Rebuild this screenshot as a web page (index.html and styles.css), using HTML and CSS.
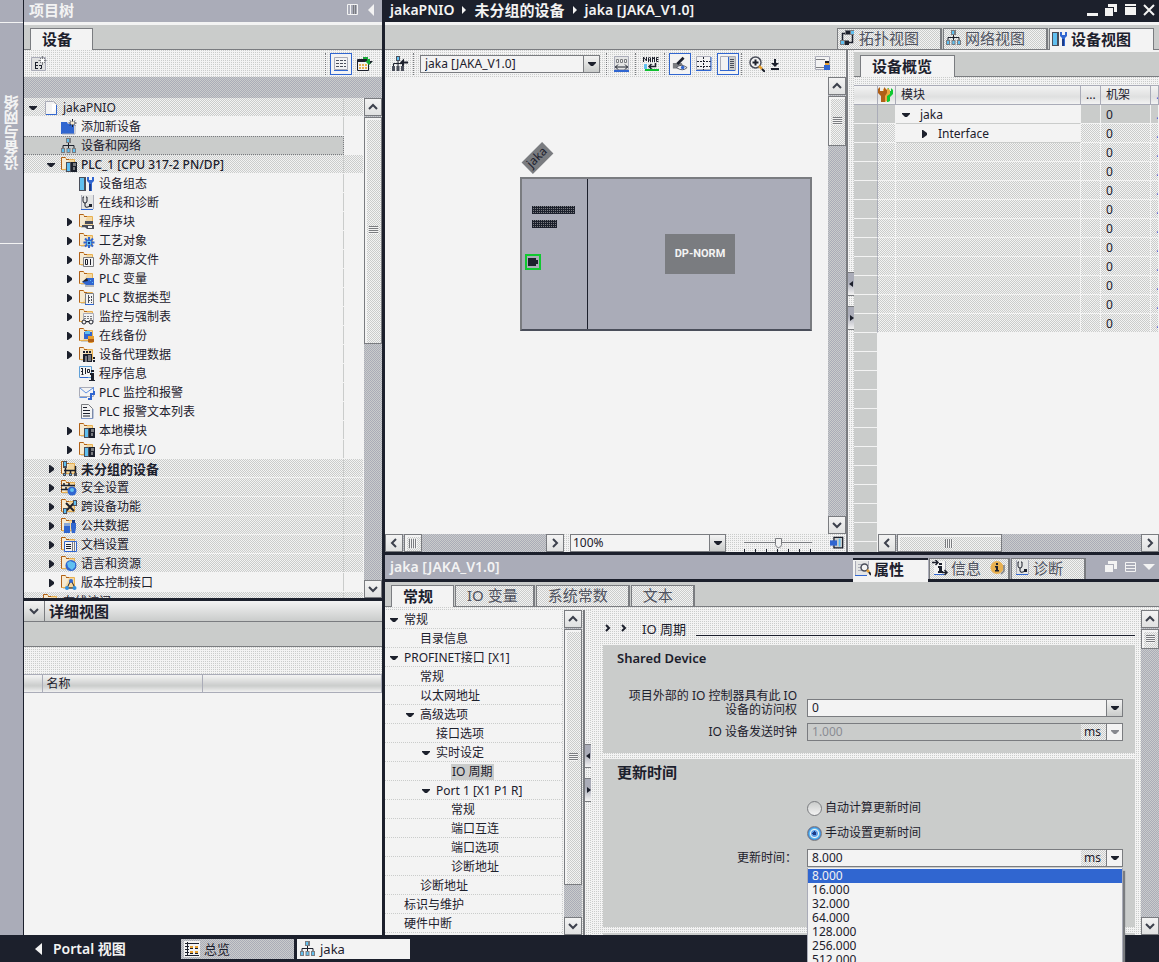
FILE: index.html
```html
<!DOCTYPE html>
<html lang="zh-CN">
<head>
<meta charset="utf-8">
<title>jakaPNIO</title>
<link rel="stylesheet" href="styles.css">
</head>
<body>
<svg class="defs" aria-hidden="true">
  <symbol id="right" viewBox="0 0 10 10"><path d="M3 1h1l4 3v2l-4 3H3z" fill="#1c202c"/></symbol>
  <symbol id="down" viewBox="0 0 10 10"><path d="M1 3h8v1L6 7H4L1 4z" fill="#1c202c"/></symbol>
  <symbol id="c-up" viewBox="0 0 12 12"><path d="M2 8l4-4 4 4" fill="none" stroke="#3c404c" stroke-width="2"/></symbol>
  <symbol id="c-down" viewBox="0 0 12 12"><path d="M2 4l4 4 4-4" fill="none" stroke="#3c404c" stroke-width="2"/></symbol>
  <symbol id="c-left" viewBox="0 0 12 12"><path d="M8 2L4 6l4 4" fill="none" stroke="#3c404c" stroke-width="2"/></symbol>
  <symbol id="c-right" viewBox="0 0 12 12"><path d="M4 2l4 4-4 4" fill="none" stroke="#3c404c" stroke-width="2"/></symbol>
  <symbol id="folder" viewBox="0 0 16 16"><path d="M2 13h12v1H2z" fill="#cacccb"/><path d="M.5 12.500V.500h4l1 2h8v10z" fill="#f6ead2" stroke="#e8b050"/><path d="M8 3h5v9H4z" fill="#f2cf8c" opacity=".7"/><path d="M.5 12.500V.500h4M5 2.500h3" fill="none" stroke="#b06018"/></symbol>
  <symbol id="project" viewBox="0 0 16 16"><path d="M2.500 1.500h8l3 3v10h-11z" fill="#f3f3f3" stroke="#aaacb8"/><path d="M3 14.500h10.500V5" fill="none" stroke="#3066d0"/><path d="M9 4h4v5l-4 4z" fill="#fff"/></symbol>
  <symbol id="add" viewBox="0 0 16 16"><path d="M0 3h6l1 2h6v10H0z" fill="#3066d0"/><path d="M1 15h13V6" fill="none" stroke="#aaacb8"/><path d="M11.500 0v8M7.500 4h8M9 1.500l5 5M14 1.500l-5 5" stroke="#1c202c"/><path d="M10 2.500h3v3h-3z" fill="#f6ead2"/></symbol>
  <symbol id="net" viewBox="0 0 16 16"><path d="M5 0h5v5H5zM0 10h4v5H0zM5.500 10h4v5h-4zM11 10h4v5h-4z" fill="#7a7c80"/><path d="M6 1h2v3H6zM1 11h2v3H1zM6.500 11h2v3h-2zM12 11h2v3h-2z" fill="#60c0f0"/><path d="M7.500 5v5M2 10V7.500h11V10" fill="none" stroke="#1c202c"/></symbol>
  <symbol id="topo" viewBox="0 0 16 16"><path d="M5 0h9v5H5zM0 10h9v5H0z" fill="#7a7c80"/><path d="M6 1h4v3H6zM5 11h4v4H5z" fill="#1c202c"/><path d="M11 1h3v3h-3zM1 11h3v3H1z" fill="#60c0f0"/><path d="M5 3.500H2.500V10M12.500 5v7.500H9" fill="none" stroke="#1c202c" stroke-width="1.500"/></symbol>
  <symbol id="plc" viewBox="0 0 16 16"><use href="#folder"/><path d="M5 5h5v10H5z" fill="#4a4e5a"/><path d="M6 6h3v8H6z" fill="#60c0f0"/><path d="M10 5h6v10h-6z" fill="#1c202c"/><path d="M12 6h3v3h-3zM12 10h2v3h-2z" fill="#7a7c80"/></symbol>
  <symbol id="config" viewBox="0 0 16 16"><path d="M0 1h7v14H0z" fill="#4a4e5a"/><path d="M1 2h4v12H1z" fill="#60c0f0"/><path d="M8 1v4l2 2v8h3V7l2-2V1l-2 0v3h-3V1z" fill="#3066d0"/><path d="M10 8h2v7h-2z" fill="#1c3c88"/></symbol>
  <symbol id="diag" viewBox="0 0 16 16"><path d="M2 0h12v14H2z" fill="#e4e5e5"/><path d="M2 14.500h12" stroke="#3066d0"/><path d="M14.500 0v14M2.500 0v14" stroke="#aaacb8"/><path d="M5 2h-1v4q0 2 2 2t2-2V2H7M6 8v3q0 2 3 1l2-1" fill="none" stroke="#1c202c"/><path d="M10 9h3v3h-3z" fill="#1c202c"/></symbol>
  <symbol id="blocks" viewBox="0 0 16 16"><use href="#folder"/><path d="M6 7h8v3H6zM3 11h12v4H8l-2-2H3z" fill="#4a4e5a"/><path d="M9 12h4v2H9z" fill="#f3f3f3"/></symbol>
  <symbol id="tech" viewBox="0 0 16 16"><use href="#folder"/><path d="M10 4v11M4.500 9.500h11M6 5.500l8 8M14 5.500l-8 8" stroke="#3066d0" stroke-width="2"/><path d="M8 8h4v4H8z" fill="#60c0f0"/><path d="M9 9h2v2H9z" fill="#1c3c88"/></symbol>
  <symbol id="source" viewBox="0 0 16 16"><use href="#folder"/><path d="M4.500 5.500h10v9h-10z" fill="#f3f3f3" stroke="#7a7c80"/><path d="M6.500 7.500h2v5h-2zM11.500 7v6" fill="none" stroke="#1c202c"/></symbol>
  <symbol id="tag" viewBox="0 0 16 16"><use href="#folder"/><path d="M3 11l5-4h7v7H7z" fill="#3066d0"/><path d="M3 11l5-4 1 3z" fill="#1c202c"/><path d="M11 9h1v1h-1zM13 11h1v1h-1z" fill="#60c0f0"/><path d="M6 15h9" stroke="#7a7c80"/></symbol>
  <symbol id="types" viewBox="0 0 16 16"><use href="#folder"/><path d="M6.500 3.500h8v11h-8z" fill="#f3f3f3" stroke="#7a7c80"/><path d="M9.500 5v8M9 7.500h3M9 10.500h3M12.500 6v7" stroke="#4a4e5a" stroke-dasharray="2 1"/><path d="M6 14.500h9" stroke="#3066d0"/></symbol>
  <symbol id="watch" viewBox="0 0 16 16"><use href="#folder"/><path d="M4.500 4.500h10v8h-10z" fill="#f3f3f3" stroke="#aaacb8"/><path d="M5 7.500h9M5 9.500h9" stroke="#7a7c80" stroke-dasharray="2 1"/><circle cx="5" cy="13" r="2" fill="#f3f3f3" stroke="#1c202c"/><circle cx="12" cy="13" r="2" fill="#f3f3f3" stroke="#1c202c"/><path d="M7 12.500h3" stroke="#1c202c"/></symbol>
  <symbol id="backup" viewBox="0 0 16 16"><use href="#folder"/><path d="M5 4h8v7H5z" fill="#3066d0"/><path d="M6 3h5v3H6z" fill="#60c0f0"/><path d="M9 8h6v6l-2 1h-3l-1-1z" fill="#e8a030"/><path d="M9 11h6v3H9z" fill="#b06018"/></symbol>
  <symbol id="proxy" viewBox="0 0 16 16"><use href="#folder"/><path d="M4 4h2v2H4zM7 4h2v2H7zM10 4h2v2h-2zM4 7h9v8H4zM14 10h2v2h-2zM14 13h2v2h-2z" fill="#1c202c"/><path d="M6 9h2v6H6zM9 8h3v6H9z" fill="#7a7c80"/></symbol>
  <symbol id="info" viewBox="0 0 16 16"><path d="M.5 .500h12v11H.500z" fill="#f3f3f3" stroke="#60a0d8"/><path d="M2 2.500h2M2 5.500h2M2.500 8.500h2M3.500 2v6M6.500 2v6M8.500 3.500h2v3h-2z" fill="none" stroke="#1c202c"/><path d="M12 4h3v2h-3zM11 7h4v7h1v1h-6v-1h2V9h-1z" fill="#1c202c"/><path d="M1 11.500h8" stroke="#3066d0"/></symbol>
  <symbol id="mail" viewBox="0 0 16 16"><path d="M.5 2.500h14v9H.500z" fill="#f3f3f3" stroke="#aaacb8"/><path d="M1 3l6 5 7-5M.500 12.500H8M14.500 2v4" fill="none" stroke="#6090e0"/><path d="M9 14h3V9h3V6" fill="none" stroke="#3066d0" stroke-width="2"/></symbol>
  <symbol id="text" viewBox="0 0 16 16"><path d="M2.500 .500h7l4 4v10h-11z" fill="#f3f3f3" stroke="#7a7c80"/><path d="M4 3.500h4M4 6.500h7M4 9.500h7M4 12h7" stroke="#1c202c"/><path d="M2 14.500h12V5" fill="none" stroke="#8098c8"/></symbol>
  <symbol id="group" viewBox="0 0 16 16"><use href="#folder"/><path d="M2 0h4v7H2z" fill="#4a4e5a"/><path d="M3 1h2v4H3z" fill="#60c0f0"/><path d="M3 9.500h12M4.500 7v6M9.500 9v4M14.500 5v8" stroke="#1c202c" stroke-width="1.500"/><path d="M2 12h3v3H2zM8 12h3v3H8zM13 12h3v3h-3z" fill="#4a4e5a"/><path d="M3 13h1v1H3zM9 13h1v1H9z" fill="#60c0f0"/></symbol>
  <symbol id="secure" viewBox="0 0 16 16"><use href="#folder"/><path d="M0 5.500h14M0 9.500h8M3 3v3M8 3v3M5 7v3" stroke="#1c202c" stroke-width="1.500"/><circle cx="11" cy="11" r="4.500" fill="#3066d0"/><circle cx="11" cy="10" r="2" fill="#60c0f0"/></symbol>
  <symbol id="cross" viewBox="0 0 16 16"><use href="#folder"/><path d="M5 4l8 8M13 4l-8 8" stroke="#1c202c" stroke-width="2"/><path d="M12 1h4v6h-4zM2 9h4v6H2z" fill="#4a4e5a"/><path d="M13 2h2v4h-2zM3 10h2v4H3z" fill="#60c0f0"/></symbol>
  <symbol id="common" viewBox="0 0 16 16"><use href="#folder"/><path d="M3 7h6v8H3z" fill="#3066d0"/><path d="M3 5h6v3H3z" fill="#8ca8d8"/><path d="M10 5h5v5l-1 5h-3l-1-5z" fill="#3066d0"/><path d="M11 2h3v3h-3z" fill="#1c3c88"/></symbol>
  <symbol id="docs" viewBox="0 0 16 16"><use href="#folder"/><path d="M3.500 4.500h12v10h-12z" fill="#f3f3f3" stroke="#3066d0"/><path d="M5 7.500h5M5 9.500h5M5 11.500h5" stroke="#1c202c"/><path d="M11.500 5v9M13.500 5v9" stroke="#7a7c80"/></symbol>
  <symbol id="lang" viewBox="0 0 16 16"><use href="#folder"/><circle cx="10" cy="9.500" r="5.500" fill="#3066d0"/><path d="M6 7l3-2 5 2v4l-3 3-4-3z" fill="#60c0f0"/></symbol>
  <symbol id="version" viewBox="0 0 16 16"><use href="#folder"/><path d="M10 5l-4 8h8z" fill="none" stroke="#1c202c"/><circle cx="10" cy="6" r="2" fill="#3066d0"/><circle cx="6" cy="13" r="2" fill="#3090e0"/><circle cx="13.500" cy="13" r="2" fill="#3090e0"/></symbol>
  <symbol id="newobj" viewBox="0 0 16 16"><path d="M.5 1.500h14v13H.500z" fill="#e0e1e1" stroke="#aaacb8"/><path d="M4.500 6v7M4 6.500h3M4 9.500h3M4 12.500h3M8 9.500h3M10.500 9v3.500H9" stroke="#1c202c" fill="none"/><path d="M11.500 0v9M7.500 4.500h8M9 2l5 5M14 2L9 7" stroke="#7a7c80"/><path d="M10 3h3v3h-3z" fill="#fff"/></symbol>
  <symbol id="list" viewBox="0 0 16 16"><path d="M1.500 1.500h13v12h-13z" fill="#f3f3f3" stroke="#aaacb8"/><path d="M3 4.500h10M3 7.500h10M3 10.500h10" stroke="#4a4e5a" stroke-dasharray="3 1"/><path d="M1 14.500h14" stroke="#3066d0"/></symbol>
  <symbol id="tableup" viewBox="0 0 16 16"><path d="M.5 3.500h11v11H.500z" fill="#f3f3f3" stroke="#1c202c"/><path d="M1 4h11v2H1z" fill="#1c202c"/><path d="M2 8h2v2H2zM5 8h2v2H5zM8 8h2v2H8zM2 11h2v2H2zM5 11h2v2H5zM8 11h2v2H8z" fill="#e8b050"/><path d="M6 1h5v2h2v3h2L12 9 8 5h2V3H6z" fill="#18a838"/><path d="M13 5h3l-3 3z" fill="#1c202c"/></symbol>
  <symbol id="netin" viewBox="0 0 16 16"><path d="M4 0h4v5H4zM0 10h3v5H0zM4.500 10h3v5h-3zM9 10h3v5H9z" fill="#4a4e5a"/><path d="M5 1h2v3H5z" fill="#60c0f0"/><path d="M6 5v5M1.500 10V7.500h9V10" fill="none" stroke="#1c202c"/><path d="M8 6.500l4-4v3h4v2h-4v3z" fill="#1c202c"/></symbol>
  <symbol id="width" viewBox="0 0 16 16"><path d="M.5 .500h14v13H.500z" fill="#e4e5e5" stroke="#aaacb8"/><path d="M2.500 3.500h2v3h-2zM6.500 3.500h2v3h-2zM10.500 3.500h2v3h-2z" fill="#f3f3f3" stroke="#7a7c80"/><path d="M1 11h13M4 8.500L1.500 11 4 13.500M11 8.500l2.500 2.500-2.500 2.500" fill="none" stroke="#1c202c"/><path d="M0 15h15" stroke="#3066d0" stroke-width="2"/></symbol>
  <symbol id="rename" viewBox="0 0 16 16"><path d="M.5 6V1l3 4V1M5.500 6V2l1-1 1 1v4M5.500 4h2M9.500 6V1l1 2 1-2v5M15.500 1.500h-2V5.500h2M13.500 3.500h2" fill="none" stroke="#1c202c"/><path d="M1 8h3v5H1z" fill="#60c0f0"/><path d="M12.500 7v3.500H6M8.500 8L6 10.500 8.500 13" fill="none" stroke="#1c202c" stroke-width="1.500"/><path d="M2 13h14v2H2z" fill="#10c030"/></symbol>
  <symbol id="eye" viewBox="0 0 18 18"><path d="M1 8h10l3 6H1z" fill="#7a7c80"/><path d="M6 9l7-7" stroke="#1c202c" stroke-width="3"/><path d="M5 13q5-5 12 0-5 5-12 0z" fill="#f3f3f3" stroke="#4a4e5a"/><circle cx="12" cy="13" r="2" fill="#3066d0"/></symbol>
  <symbol id="cells" viewBox="0 0 16 16"><path d="M.5 .500h14v13H.500z" fill="#f3f3f3" stroke="#aaacb8"/><path d="M7.500 1v13M1 5.500h14M1 10.500h14" stroke="#1c202c" stroke-dasharray="2 1"/><path d="M0 14.500h15V1" fill="none" stroke="#3066d0"/></symbol>
  <symbol id="columns" viewBox="0 0 16 16"><path d="M.5 .500h15v14H.500z" fill="#f3f3f3" stroke="#aaacb8"/><path d="M9 1h6v13H9z" fill="#cacccb"/><path d="M10 3.500h4M10 5.500h4M10 7.500h4M10 9.500h4M10 11.500h4" stroke="#4a4e5a"/><path d="M8.500 1v13M0 14.500h15" stroke="#3066d0"/></symbol>
  <symbol id="zoom" viewBox="0 0 16 16"><circle cx="6.500" cy="6.500" r="5.500" fill="#f3f3f3" stroke="#4a4e5a" stroke-width="1.500"/><path d="M3.500 6.500h6M6.500 3.500v6" stroke="#1c202c" stroke-width="2"/><path d="M10 10l3 3" stroke="#e8a030" stroke-width="2.500"/><path d="M13 13l3 3" stroke="#1c202c" stroke-width="2"/></symbol>
  <symbol id="drop" viewBox="0 0 10 12"><path d="M5 1v6M1 11h8" stroke="#1c202c" stroke-width="2"/><path d="M1 5h8L5 9z" fill="#1c202c"/></symbol>
  <symbol id="panel" viewBox="0 0 16 16"><path d="M.5 .500h14v13H.500z" fill="#f3f3f3" stroke="#aaacb8"/><path d="M1 3.500h9M1 11.500h9" stroke="#7a7c80"/><path d="M10 5h4v4h-4z" fill="#e8a030"/><path d="M9 9h6v5H9z" fill="#3066d0"/><path d="M10 5h4v2h-4z" fill="#1c202c"/></symbol>
  <symbol id="inspect" viewBox="0 0 16 16"><path d="M1 0h12v14H1z" fill="#e4e5e5"/><path d="M3 3.500h4M3 6.500h3M3 9.500h4" stroke="#aaacb8"/><circle cx="9.500" cy="6.500" r="3.500" fill="#f3f3f3" stroke="#4a4e5a" stroke-width="1.500"/><path d="M12 9l2 2" stroke="#e8a030" stroke-width="2.500"/><path d="M14 11l2 3" stroke="#1c202c" stroke-width="2"/><path d="M0 14.500h12" stroke="#3066d0"/><path d="M13.500 0v6M.500 0v14" stroke="#aaacb8"/></symbol>
  <symbol id="infotab" viewBox="0 0 16 16"><path d="M2 1h12v13H2z" fill="#f3f3f3"/><path d="M2 14.500h10" stroke="#3066d0"/><path d="M13.500 1v9" stroke="#aaacb8"/><path d="M0 2.500h6M3.500 0L6 2.500 3.500 5M10 12.500h5M12.500 10l2.500 2.500-2.500 2.500" fill="none" stroke="#1c202c" stroke-width="1.500"/><path d="M7 3h3v2H7zM6 6h4v5h1v2H6v-2h1V8H6z" fill="#1c202c"/></symbol>
  <symbol id="badge" viewBox="0 0 16 16"><circle cx="7" cy="7.500" r="6.500" fill="#e8b050"/><path d="M14 5v6l-3 3" fill="none" stroke="#7a7c80" stroke-width="1.500"/><path d="M6 3h2v2H6zM5 6h3v4h1v1.500H5V10h1V7.500H5z" fill="#1c202c"/></symbol>
  <symbol id="wrench" viewBox="0 0 16 16"><path d="M9 2l2-1v3h2V1l2 2v4l-3 3v4l-2 1H9z" fill="#10c830"/><path d="M5 2l2-1v3h2V1l3 2v4L9 9v5l-2 1H5z" fill="#e8a840"/><path d="M0 2l2-2v4h4V0l3 3v3L7 9v6H3V9L0 6z" fill="#b06018"/></symbol>
  <symbol id="overview" viewBox="0 0 16 16"><path d="M0 0h16v16H0z" fill="#f3f3f3"/><path d="M1 2.500h14M1 14.500h14M3.500 1v14M1 5.500h4M1 8.500h4M1 11.500h4" stroke="#1c202c"/><path d="M6 5h3v2H6zM11 5h3v2h-3zM6 10h3v2H6zM11 10h3v2h-3z" fill="#e8a030"/><path d="M6 7.500h3M11 7.500h3M6 12.500h3M11 12.500h3" stroke="#1c202c"/></symbol>
  <symbol id="overlap" viewBox="0 0 16 16"><path d="M4.500 1.500h10v12h-10z" fill="#cacccb" stroke="#1c202c" stroke-width="1.500"/><path d="M11 3v9" stroke="#60c0f0" stroke-width="2"/><path d="M0 5h8v6H0z" fill="#3066d0"/></symbol>
</svg>

<div class="workspace">
  <aside class="rail"><button class="rail-tab">设备与网络</button></aside>

  <section class="project">
    <header class="title lavender">
      <h2>项目树</h2>
      <svg class="icon" viewBox="0 0 16 16"><path d="M2.500 2.500h10v10h-10zM5.500 2v11" fill="none" stroke="#f3f3f3"/><path d="M8.500 3v9M10.500 3v9" stroke="#7a7c80"/></svg>
      <svg class="icon" viewBox="0 0 16 16"><path d="M10 2v12L4 8z" fill="#f3f3f3"/></svg>
    </header>
    <div class="tabs tree-tabs"><button class="tab active">设备</button></div>
    <div class="toolbar tree-tools dots">
      <button class="tool" aria-label="新建"><svg class="icon"><use href="#newobj"/></svg></button>
      <span class="grow"></span><span class="sep"></span>
      <button class="tool on" aria-label="列表"><svg class="icon"><use href="#list"/></svg></button>
      <button class="tool" aria-label="打开表格"><svg class="icon"><use href="#tableup"/></svg></button>
    </div>
    <div class="band"></div>
    <div class="tree-wrap">
      <ul class="tree">
        <li class="l0 shade"><svg class="arrow"><use href="#down"/></svg><svg class="icon"><use href="#project"/></svg>jakaPNIO</li>
        <li class="l1"><i class="arrow"></i><svg class="icon"><use href="#add"/></svg>添加新设备</li>
        <li class="l1 selected"><i class="arrow"></i><svg class="icon"><use href="#net"/></svg>设备和网络</li>
        <li class="l1 shade strong"><svg class="arrow"><use href="#down"/></svg><svg class="icon"><use href="#plc"/></svg>PLC_1 [CPU 317-2 PN/DP]</li>
        <li class="l2"><i class="arrow"></i><svg class="icon"><use href="#config"/></svg>设备组态</li>
        <li class="l2"><i class="arrow"></i><svg class="icon"><use href="#diag"/></svg>在线和诊断</li>
        <li class="l2"><svg class="arrow"><use href="#right"/></svg><svg class="icon"><use href="#blocks"/></svg>程序块</li>
        <li class="l2"><svg class="arrow"><use href="#right"/></svg><svg class="icon"><use href="#tech"/></svg>工艺对象</li>
        <li class="l2"><svg class="arrow"><use href="#right"/></svg><svg class="icon"><use href="#source"/></svg>外部源文件</li>
        <li class="l2"><svg class="arrow"><use href="#right"/></svg><svg class="icon"><use href="#tag"/></svg>PLC 变量</li>
        <li class="l2"><svg class="arrow"><use href="#right"/></svg><svg class="icon"><use href="#types"/></svg>PLC 数据类型</li>
        <li class="l2"><svg class="arrow"><use href="#right"/></svg><svg class="icon"><use href="#watch"/></svg>监控与强制表</li>
        <li class="l2"><svg class="arrow"><use href="#right"/></svg><svg class="icon"><use href="#backup"/></svg>在线备份</li>
        <li class="l2"><svg class="arrow"><use href="#right"/></svg><svg class="icon"><use href="#proxy"/></svg>设备代理数据</li>
        <li class="l2"><i class="arrow"></i><svg class="icon"><use href="#info"/></svg>程序信息</li>
        <li class="l2"><i class="arrow"></i><svg class="icon"><use href="#mail"/></svg>PLC 监控和报警</li>
        <li class="l2"><i class="arrow"></i><svg class="icon"><use href="#text"/></svg>PLC 报警文本列表</li>
        <li class="l2"><svg class="arrow"><use href="#right"/></svg><svg class="icon"><use href="#plc"/></svg>本地模块</li>
        <li class="l2"><svg class="arrow"><use href="#right"/></svg><svg class="icon"><use href="#plc"/></svg>分布式 I/O</li>
        <li class="l1 shade heavy"><svg class="arrow"><use href="#right"/></svg><svg class="icon"><use href="#group"/></svg>未分组的设备</li>
        <li class="l1 shade"><svg class="arrow"><use href="#right"/></svg><svg class="icon"><use href="#secure"/></svg>安全设置</li>
        <li class="l1 shade"><svg class="arrow"><use href="#right"/></svg><svg class="icon"><use href="#cross"/></svg>跨设备功能</li>
        <li class="l1 shade"><svg class="arrow"><use href="#right"/></svg><svg class="icon"><use href="#common"/></svg>公共数据</li>
        <li class="l1 shade"><svg class="arrow"><use href="#right"/></svg><svg class="icon"><use href="#docs"/></svg>文档设置</li>
        <li class="l1 shade"><svg class="arrow"><use href="#right"/></svg><svg class="icon"><use href="#lang"/></svg>语言和资源</li>
        <li class="l1"><svg class="arrow"><use href="#right"/></svg><svg class="icon"><use href="#version"/></svg>版本控制接口</li>
        <li class="l0 shade"><svg class="arrow"><use href="#right"/></svg><svg class="icon"><use href="#folder"/></svg>在线访问</li>
      </ul>
      <div class="scroll vertical tree-scroll">
        <button aria-label="向上"><svg><use href="#c-up"/></svg></button>
        <div class="track"><div class="thumb"></div></div>
        <button aria-label="向下"><svg><use href="#c-down"/></svg></button>
      </div>
    </div>
    <div class="details">
      <header class="details-head"><button aria-label="折叠"><svg><use href="#c-down"/></svg></button><h2>详细视图</h2></header>
      <div class="details-bar"></div>
      <div class="details-tools dots"></div>
      <table class="details-table"><thead><tr><th class="mark"></th><th class="name">名称</th><th></th></tr></thead></table>
    </div>
  </section>

  <main class="main">
    <section class="editor">
      <header class="title dark">
        <h1>jakaPNIO</h1><svg class="crumb" viewBox="0 0 6 10"><path d="M1 1l4 4-4 4z" fill="#f3f3f3"/></svg>
        <h1 class="cjk">未分组的设备</h1><svg class="crumb" viewBox="0 0 6 10"><path d="M1 1l4 4-4 4z" fill="#f3f3f3"/></svg>
        <h1>jaka [JAKA_V1.0]</h1>
        <span class="grow"></span>
        <button aria-label="最小化"><svg viewBox="0 0 12 12"><path d="M1 9h11v3H1z" fill="#f3f3f3"/></svg></button>
        <button aria-label="浮动"><svg viewBox="0 0 12 12"><path d="M3 0h9v8H9V3H3z" fill="#f3f3f3"/><path d="M0 4h8v8H0z" fill="#f3f3f3"/></svg></button>
        <button aria-label="最大化"><svg viewBox="0 0 12 12"><path d="M1 0h11v2H1zM1 3h11v8H1z" fill="#f3f3f3"/></svg></button>
        <button aria-label="关闭"><svg viewBox="0 0 12 12"><path d="M1 1l10 10M11 1L1 11" stroke="#f3f3f3" stroke-width="2"/></svg></button>
      </header>
      <div class="tabs view-tabs">
        <button class="tab"><svg class="icon"><use href="#topo"/></svg>拓扑视图</button>
        <button class="tab"><svg class="icon"><use href="#net"/></svg>网络视图</button>
        <button class="tab active"><svg class="icon"><use href="#config"/></svg>设备视图</button>
      </div>
      <div class="editor-body">
        <div class="device">
          <div class="toolbar dots">
            <button class="tool" aria-label="转到网络"><svg class="icon"><use href="#netin"/></svg></button><span class="sep"></span>
            <div class="combo device-combo"><select aria-label="设备"><option>jaka [JAKA_V1.0]</option></select><span class="caret"><svg><use href="#down"/></svg></span></div>
            <span class="sep"></span>
            <button class="tool" aria-label="调整宽度"><svg class="icon"><use href="#width"/></svg></button><span class="sep"></span>
            <button class="tool" aria-label="名称"><svg class="icon"><use href="#rename"/></svg></button><span class="sep"></span>
            <button class="tool on" aria-label="显示"><svg class="icon"><use href="#eye"/></svg></button>
            <button class="tool" aria-label="网格"><svg class="icon"><use href="#cells"/></svg></button>
            <button class="tool on" aria-label="列"><svg class="icon"><use href="#columns"/></svg></button><span class="sep"></span>
            <button class="tool" aria-label="缩放"><svg class="icon"><use href="#zoom"/></svg></button>
            <button class="mini" aria-label="缩放菜单"><svg><use href="#drop"/></svg></button>
            <span class="grow"></span>
            <button class="tool" aria-label="保存布局"><svg class="icon"><use href="#panel"/></svg></button>
          </div>
          <div class="canvas-wrap">
            <div class="canvas">
              <div class="dev-label">jaka</div>
              <div class="dev">
                <div class="dev-head"></div>
                <div class="bar one"></div><div class="bar two"></div>
                <div class="port"></div>
                <div class="norm">DP-NORM</div>
              </div>
            </div>
            <div class="scroll vertical canvas-scroll">
              <button aria-label="向上"><svg><use href="#c-up"/></svg></button>
              <div class="track"><div class="thumb"></div></div>
              <button aria-label="向下"><svg><use href="#c-down"/></svg></button>
            </div>
          </div>
          <div class="canvas-foot dots">
            <div class="scroll horizontal canvas-hscroll">
              <button aria-label="向左"><svg><use href="#c-left"/></svg></button>
              <div class="track"><div class="thumb"></div></div>
              <button aria-label="向右"><svg><use href="#c-right"/></svg></button>
            </div>
            <div class="combo zoom-combo"><select aria-label="缩放比例"><option>100%</option></select><span class="caret"><svg><use href="#down"/></svg></span></div>
            <input class="zoom-range" type="range" aria-label="缩放" value="50">
            <button class="mini" aria-label="总览导航"><svg class="icon"><use href="#overlap"/></svg></button>
          </div>
        </div>
        <div class="splitter dots"><button aria-label="向左展开"><svg viewBox="0 0 5 10"><path d="M4 2v6L0 5z" fill="#1c202c"/></svg></button><button aria-label="向右展开"><svg viewBox="0 0 5 10"><path d="M1 2v6l4-3z" fill="#1c202c"/></svg></button></div>
        <div class="overview">
          <div class="tabs overview-tabs"><button class="tab active">设备概览</button></div>
          <div class="overview-gap dots"></div>
          <div class="grid-wrap">
            <table class="grid">
              <colgroup><col class="c-gutter"><col class="c-icon"><col><col class="c-dots"><col class="c-rack"><col class="c-more"></colgroup>
              <thead><tr><th></th><th class="pic"><svg class="icon"><use href="#wrench"/></svg></th><th>模块</th><th>...</th><th>机架</th><th>.</th></tr></thead>
              <tbody>
                <tr class="current"><td></td><td></td><td class="plain"><span class="cell"><svg class="arrow"><use href="#down"/></svg>jaka</span></td><td></td><td>0</td><td>.</td></tr>
                <tr><td></td><td></td><td class="plain"><span class="cell inner"><svg class="arrow"><use href="#right"/></svg>Interface</span></td><td></td><td>0</td><td>.</td></tr>
                <tr><td></td><td></td><td></td><td></td><td>0</td><td>.</td></tr>
                <tr><td></td><td></td><td></td><td></td><td>0</td><td>.</td></tr>
                <tr><td></td><td></td><td></td><td></td><td>0</td><td>.</td></tr>
                <tr><td></td><td></td><td></td><td></td><td>0</td><td>.</td></tr>
                <tr><td></td><td></td><td></td><td></td><td>0</td><td>.</td></tr>
                <tr><td></td><td></td><td></td><td></td><td>0</td><td>.</td></tr>
                <tr><td></td><td></td><td></td><td></td><td>0</td><td>.</td></tr>
                <tr><td></td><td></td><td></td><td></td><td>0</td><td>.</td></tr>
                <tr><td></td><td></td><td></td><td></td><td>0</td><td>.</td></tr>
                <tr><td></td><td></td><td></td><td></td><td>0</td><td>.</td></tr>
              </tbody>
            </table>
            <div class="scroll horizontal grid-hscroll">
              <button aria-label="向左"><svg><use href="#c-left"/></svg></button>
              <div class="track"><div class="thumb"></div></div>
              <button aria-label="向右"><svg><use href="#c-right"/></svg></button>
            </div>
          </div>
        </div>
      </div>
    </section>

    <section class="inspector">
      <header class="inspector-head">
        <h2>jaka [JAKA_V1.0]</h2>
        <div class="inspector-tabs">
          <button class="tab active"><svg class="icon"><use href="#inspect"/></svg>属性</button>
          <button class="tab info-tab"><svg class="icon"><use href="#infotab"/></svg>信息<svg class="icon end"><use href="#badge"/></svg></button>
          <button class="tab"><svg class="icon"><use href="#diag"/></svg>诊断</button>
        </div>
        <div class="pane-buttons">
          <button aria-label="浮动"><svg viewBox="0 0 12 12"><path d="M3 0h9v8H9V3H3z" fill="#f3f3f3"/><path d="M0 4h8v7H0z" fill="#f3f3f3"/></svg></button>
          <button aria-label="平铺"><svg viewBox="0 0 12 12"><path d="M1.500 1.500h10v9h-10zM1 4.500h11M1 7.500h11" fill="none" stroke="#f3f3f3"/></svg></button>
          <button aria-label="折叠"><svg viewBox="0 0 12 12"><path d="M0 3h12L6 9z" fill="#f3f3f3"/></svg></button>
        </div>
      </header>
      <div class="tabs prop-tabs">
        <button class="tab active">常规</button><button class="tab narrow">IO 变量</button><button class="tab">系统常数</button><button class="tab">文本</button>
      </div>
      <div class="inspector-body dots">
        <ul class="nav">
          <li class="l0"><svg class="arrow"><use href="#down"/></svg><span>常规</span></li>
          <li class="l1"><i class="arrow"></i><span>目录信息</span></li>
          <li class="l0"><svg class="arrow"><use href="#down"/></svg><span>PROFINET接口 [X1]</span></li>
          <li class="l1"><i class="arrow"></i><span>常规</span></li>
          <li class="l1"><i class="arrow"></i><span>以太网地址</span></li>
          <li class="l1"><svg class="arrow"><use href="#down"/></svg><span>高级选项</span></li>
          <li class="l2"><i class="arrow"></i><span>接口选项</span></li>
          <li class="l2"><svg class="arrow"><use href="#down"/></svg><span>实时设定</span></li>
          <li class="l3"><i class="arrow"></i><span class="picked">IO 周期</span></li>
          <li class="l2"><svg class="arrow"><use href="#down"/></svg><span>Port 1 [X1 P1 R]</span></li>
          <li class="l3"><i class="arrow"></i><span>常规</span></li>
          <li class="l3"><i class="arrow"></i><span>端口互连</span></li>
          <li class="l3"><i class="arrow"></i><span>端口选项</span></li>
          <li class="l3"><i class="arrow"></i><span>诊断地址</span></li>
          <li class="l1"><i class="arrow"></i><span>诊断地址</span></li>
          <li class="l0"><i class="arrow"></i><span>标识与维护</span></li>
          <li class="l0"><i class="arrow"></i><span>硬件中断</span></li>
        </ul>
        <div class="scroll vertical nav-scroll">
          <button aria-label="向上"><svg><use href="#c-up"/></svg></button>
          <div class="track"><div class="thumb"></div></div>
          <button aria-label="向下"><svg><use href="#c-down"/></svg></button>
        </div>
        <div class="splitter dots"><button aria-label="向左展开"><svg viewBox="0 0 5 10"><path d="M4 2v6L0 5z" fill="#1c202c"/></svg></button><button aria-label="向右展开"><svg viewBox="0 0 5 10"><path d="M1 2v6l4-3z" fill="#1c202c"/></svg></button></div>
        <div class="content">
          <div class="content-head">
            <svg viewBox="0 0 24 8"><path d="M3 1l3 3-3 3M19 1l3 3-3 3" fill="none" stroke="#1c202c" stroke-width="2"/></svg>
            <h3>IO 周期</h3><span class="rule"></span>
          </div>
          <form class="panel">
            <h4>Shared Device</h4>
            <div class="fields">
              <label for="access">项目外部的 IO 控制器具有此 IO<br>设备的访问权</label>
              <div class="combo"><select id="access"><option>0</option></select><span class="caret"><svg><use href="#down"/></svg></span></div>
              <label for="clock">IO 设备发送时钟</label>
              <div class="combo off"><select id="clock" disabled><option>1.000</option></select><span class="unit">ms</span><span class="caret"><svg><use href="#down"/></svg></span></div>
            </div>
          </form>
          <form class="panel update">
            <h4>更新时间</h4>
            <div class="fields">
              <label class="radio"><input type="radio" name="mode">自动计算更新时间</label>
              <label class="radio"><input type="radio" name="mode" checked>手动设置更新时间</label>
              <label for="cycle">更新时间：</label>
              <div class="combo open">
                <select id="cycle"><option>8.000</option></select><span class="unit">ms</span><span class="caret"><svg><use href="#down"/></svg></span>
                <ul class="options" role="listbox" aria-label="更新时间">
                  <li role="option" aria-selected="true">8.000</li><li role="option">16.000</li><li role="option">32.000</li><li role="option">64.000</li><li role="option">128.000</li><li role="option">256.000</li><li role="option">512.000</li>
                </ul>
              </div>
            </div>
          </form>
          <div class="panel next"></div>
        </div>
        <div class="scroll vertical content-scroll">
          <button aria-label="向上"><svg><use href="#c-up"/></svg></button>
          <div class="track"><div class="thumb"></div></div>
          <button aria-label="向下"><svg><use href="#c-down"/></svg></button>
        </div>
      </div>
    </section>
  </main>
</div>

<footer class="taskbar">
  <button class="portal"><svg viewBox="0 0 8 12"><path d="M7 0v12L0 6z" fill="#f3f3f3"/></svg>Portal 视图</button>
  <button class="task"><svg class="icon"><use href="#overview"/></svg>总览</button>
  <button class="task current"><svg class="icon"><use href="#net"/></svg>jaka</button>
</footer>
</body>
</html>
```
FILE: styles.css
```css
:root {
  --ink: #1c202c;
  --lavender: #aaacb8;
  --gray: #cacccb;
  --paper: #f3f3f3;
  --line: #7a7c80;
  --blue: #3066d0;
  --checker: conic-gradient(var(--gray) 25%, var(--paper) 0 50%, var(--gray) 0 75%, var(--paper) 0) 0 0 / 2px 2px;
  --checker-dark: conic-gradient(var(--gray) 25%, var(--lavender) 0 50%, var(--gray) 0 75%, var(--lavender) 0) 0 0 / 2px 2px;
}

* { box-sizing: border-box; }

body {
  margin: 0;
  height: 100vh;
  overflow: hidden;
  display: flex;
  flex-direction: column;
  background: var(--ink);
  color: var(--ink);
  font: 12px/14px "Noto Sans", "Noto Sans CJK SC", sans-serif;
}

h1, h2, h3, h4, ul { margin: 0; padding: 0; font-size: inherit; list-style: none; }
button, select, input { font: inherit; color: inherit; margin: 0; }
button { padding: 0; border: 0; background: none; flex: none; }
svg { display: block; flex: none; }

.defs { position: absolute; width: 0; height: 0; }
.icon { width: 16px; height: 16px; }
.arrow { width: 10px; height: 10px; flex: none; }
.grow { flex: 1; }
.dots { background: conic-gradient(var(--gray) 25%, var(--paper) 0) 0 0 / 2px 2px; }

.workspace { flex: 1; min-height: 0; display: flex; }

/* Left rail */
.rail { width: 24px; padding-top: 22px; background: var(--lavender); border-right: 1px solid var(--ink); }
.rail-tab {
  width: 23px;
  height: 222px;
  border-top: 1px solid var(--paper);
  border-bottom: 1px solid var(--paper);
  color: var(--paper);
  font-size: 15px;
  line-height: 22px;
  font-weight: 600;
  writing-mode: vertical-rl;
  transform: rotate(180deg);
  text-align: center;
}

/* Title bars and tabs */
.title {
  height: 25px;
  flex: none;
  display: flex;
  align-items: center;
  padding: 0 5px 2px;
  border-bottom: 3px solid var(--paper);
  font-size: 14px;
  color: var(--paper);
}
.title h1, .title h2 { font-weight: 600; }
.title .cjk { font-size: 15px; }
.title.lavender { background: var(--lavender); font-size: 15px; gap: 3px; padding-right: 2px; }
.title.lavender h2 { flex: 1; }
.title.dark { background: var(--ink); gap: 7px; padding-right: 4px; }
.title.dark h1 { white-space: nowrap; }
.crumb { width: 6px; height: 10px; }
.title.dark button svg, .pane-buttons svg { width: 12px; height: 12px; }

.tabs {
  height: 25px;
  flex: none;
  display: flex;
  gap: 1px;
  padding: 3px 6px 0;
  background: var(--gray);
  border-bottom: 1px solid var(--line);
}
.tab {
  height: 21px;
  display: flex;
  align-items: center;
  gap: 3px;
  padding: 0 20px 2px 11px;
  border: 1px solid var(--line);
  border-bottom: 0;
  border-right-width: 2px;
  background: var(--checker);
  color: #50535f;
  font-size: 15px;
}
.tab.active { height: 22px; background: var(--paper); color: var(--ink); font-weight: 700; border-right-width: 1px; }
.tab.narrow { padding-right: 15px; }
.view-tabs { justify-content: flex-end; padding-right: 5px; }
.view-tabs .tab { width: 105px; padding-left: 2px; padding-right: 0; }

/* Toolbars */
.toolbar { height: 27px; flex: none; display: flex; align-items: center; gap: 2px; padding: 0 12px 0 4px; }
.tool { width: 22px; height: 22px; display: grid; place-items: center; border: 1px solid transparent; }
.tool.on { border-color: var(--blue); background: var(--paper); }
.sep { width: 1px; height: 22px; margin-right: 2px; border-left: 1px dotted var(--line); }
.mini svg { width: 10px; height: 12px; }
.tree-tools { padding-right: 6px; }

/* Combo boxes */
.combo { position: relative; display: flex; height: 18px; border: 1px solid var(--line); background: var(--paper); }
.combo select {
  flex: 1;
  min-width: 0;
  appearance: none;
  border: 0;
  padding: 0 4px;
  background: transparent;
  opacity: 1;
  color: inherit;
}
.caret { width: 16px; display: grid; place-items: center; border-left: 1px solid var(--line); background: linear-gradient(var(--paper), var(--gray)); }
.caret svg { width: 10px; height: 10px; }
.unit { width: 25px; padding-left: 3px; line-height: 16px; background: var(--checker); }
.combo.off { background: var(--gray); }
.combo.off select { color: #8a8c94; }
.combo.off .caret { background: var(--paper); }
.combo.off .caret svg { opacity: .5; }
.combo.open .caret { background: var(--paper); }
.device-combo { width: 180px; margin: 0 4px 0 2px; }
.zoom-combo { width: 156px; margin-left: 6px; }
.zoom-combo select { padding-left: 2px; }

/* Scroll bars */
.scroll { display: flex; background: var(--checker-dark); }
.scroll.vertical { width: 18px; flex: none; flex-direction: column; }
.scroll.horizontal { height: 18px; }
.scroll button, .thumb { border: 1px solid var(--line); background: var(--paper); }
.scroll button { width: 18px; height: 18px; display: grid; place-items: center; background: linear-gradient(var(--paper), #e0e1e1); }
.scroll button svg { width: 12px; height: 12px; }
.track { flex: 1; min-height: 0; min-width: 0; padding-top: 1px; }
.horizontal .track { padding: 0 0 0 1px; }
.thumb { display: grid; place-items: center; background: var(--checker); box-shadow: inset 2px 2px 0 var(--paper); }
.thumb::after { content: ""; width: 9px; height: 8px; background: repeating-linear-gradient(var(--line) 0 1px, var(--paper) 1px 2px); }
.horizontal .thumb { height: 18px; }
.horizontal .thumb::after { width: 8px; height: 9px; background: repeating-linear-gradient(90deg, var(--line) 0 1px, var(--paper) 1px 2px); }
.tree-scroll .thumb { height: 49%; }
.canvas-scroll .thumb { height: 12%; }
.nav-scroll .thumb { height: 89%; }
.content-scroll .thumb { height: 7%; }
.canvas-hscroll .thumb { width: 13%; }
.grid-hscroll .thumb { width: 43%; }

/* Project tree */
.project { width: 358px; flex: none; display: flex; flex-direction: column; background: var(--paper); }
.band { height: 21px; flex: none; background: var(--checker-dark); }
.tree-wrap { flex: 500 1 0; min-height: 0; display: flex; overflow: hidden; border-bottom: 3px solid var(--ink); box-sizing: content-box; }
.tree { flex: 1; min-width: 0; margin-right: 1px; background: linear-gradient(var(--gray), var(--gray)) right 19px top / 1px 100% no-repeat; }
.tree li { height: 19px; display: flex; align-items: center; padding-top: 1px; border-bottom: 1px solid var(--paper); }
.tree .icon { margin: 0 4px 0 5px; }
.tree .l0 { padding-left: 4px; }
.tree .l1 { padding-left: 22px; }
.tree .l2 { padding-left: 40px; }
.tree .shade { background: linear-gradient(var(--gray), var(--gray)) right 19px top / 1px 100% no-repeat, var(--checker); }
.tree .selected { background: var(--gray); border: 1px dotted var(--line); border-left: 0; margin-right: 19px; }
.strong { font-weight: 500; }
.heavy { font-size: 13px; font-weight: 700; }

.details { flex: 334 1 0; min-height: 0; }
.details-head { height: 21px; display: flex; align-items: center; border-bottom: 1px solid var(--line); background: linear-gradient(var(--paper), var(--gray)); font-size: 15px; }
.details-head button { width: 21px; height: 20px; padding-left: 4px; border-right: 1px solid var(--line); }
.details-head button svg { width: 12px; height: 12px; }
.details-head h2 { padding-left: 4px; }
.details-bar { height: 25px; background: var(--gray); border-bottom: 1px solid var(--line); }
.details-tools { height: 27px; }
.details-table { width: 100%; border-collapse: collapse; table-layout: fixed; }
.details-table th { height: 18px; padding: 0 4px; border: 1px solid var(--lavender); border-left: 0; background: linear-gradient(var(--paper), var(--gray) 60%, var(--paper)); font-weight: 400; text-align: left; }
.details-table .mark { width: 18px; }
.details-table .name { width: 160px; }

/* Device view */
.main { flex: 1; min-width: 0; margin-left: 3px; display: flex; flex-direction: column; gap: 3px; }
.editor { flex: 552 1 0; min-height: 0; display: flex; flex-direction: column; background: var(--paper); }
.editor-body { flex: 1; min-height: 0; display: flex; }
.device { flex: 461 1 0; min-width: 0; display: flex; flex-direction: column; }
.canvas-wrap { flex: 1; min-height: 0; display: flex; }
.canvas { flex: 1; position: relative; overflow: hidden; }
.canvas-foot { display: flex; align-items: center; }
.canvas-hscroll { flex: 1; }
.canvas-foot .mini { margin: 0 2px 0 6px; }
.canvas-foot .mini svg { width: 14px; height: 14px; }
.zoom-range {
  appearance: none;
  width: 68px;
  height: 18px;
  margin: 0 12px 0 18px;
  background:
    linear-gradient(var(--line), var(--line)) 0 8px / 100% 1px no-repeat,
    repeating-linear-gradient(90deg, var(--ink) 0 1px, transparent 1px 11px) 0 15px / 100% 3px no-repeat;
}
.zoom-range::-webkit-slider-thumb { appearance: none; width: 7px; height: 10px; background: var(--paper); border: 1px solid var(--line); border-radius: 0 0 4px 4px; }

.dev-label {
  position: absolute;
  left: 138px;
  top: 73px;
  width: 29px;
  height: 16px;
  background: var(--line);
  text-align: center;
  transform: rotate(-45deg);
}
.dev { position: absolute; left: 135px; top: 100px; width: 292px; height: 154px; background: var(--lavender); border: 2px solid var(--line); border-bottom-color: #4a4e5a; }
.dev-head { width: 66px; height: 100%; border-right: 1px solid var(--ink); }
.bar { position: absolute; left: 10px; height: 8px; background: conic-gradient(var(--line) 25%, var(--ink) 0) 0 0 / 2px 2px; }
.bar.one { top: 27px; width: 43px; }
.bar.two { top: 41px; width: 25px; }
.port { position: absolute; left: 3px; top: 75px; width: 16px; height: 16px; border: 2px solid #10c830; background: linear-gradient(var(--ink), var(--ink)) 9px 4px / 2px 4px no-repeat, linear-gradient(var(--ink), var(--ink)) 1px 2px / 8px 8px no-repeat, var(--lavender); }
.norm { position: absolute; left: 143px; top: 55px; width: 70px; height: 40px; background: var(--line); color: var(--paper); font: 700 11px/40px Roboto, sans-serif; text-align: center; }

.splitter { width: 8px; flex: none; display: flex; flex-direction: column; justify-content: center; gap: 10px; border-left: 2px solid var(--line); }
.splitter button { height: 24px; display: grid; place-items: center; border: 1px solid var(--line); border-width: 1px 0; background: linear-gradient(var(--lavender) 40%, var(--paper)); }
.splitter svg { width: 5px; height: 10px; }

.overview { flex: 305 1 0; min-width: 0; display: flex; flex-direction: column; padding-top: 2px; }
.overview-tabs .tab { width: 95px; padding-left: 11px; padding-right: 0; }
.overview-gap { height: 8px; }
.grid-wrap { flex: 1; min-height: 0; display: flex; flex-direction: column; justify-content: space-between; background: repeating-linear-gradient(var(--gray) 0 18px, var(--paper) 18px 19px) 0 1px / 23px 100% no-repeat; }
.grid { width: 100%; border-collapse: separate; border-spacing: 0; table-layout: fixed; }
.c-gutter { width: 24px; }
.c-icon { width: 18px; }
.c-dots { width: 20px; }
.c-rack { width: 50px; }
.c-more { width: 8px; }
.grid th, .grid td { height: 19px; padding: 0 5px; text-align: left; font-weight: 400; overflow: hidden; white-space: nowrap; }
.grid th { height: 20px; border: 1px solid var(--lavender); border-left: 0; background: linear-gradient(var(--paper), #dfe0e0 60%, var(--paper)); }
.grid th.pic { padding: 0; }
.grid td { padding-top: 1px; border: solid var(--paper); border-width: 0 1px 1px 0; background: var(--checker) padding-box; }
.grid td:first-child { background: var(--gray); border-right-color: var(--lavender); }
.grid .current td { background: var(--gray); }
.grid td.plain, .grid .current td.plain { background: var(--paper); border-bottom-color: var(--gray); }
.grid th:last-child, .grid td:last-child { color: var(--blue); }
.cell { display: flex; align-items: center; gap: 9px; }
.cell.inner { padding-left: 18px; }
.grid-hscroll { margin-left: 24px; }

/* Inspector */
.inspector { flex: 380 1 0; min-height: 0; display: flex; flex-direction: column; background: var(--paper); }
.inspector-head { height: 27px; flex: none; display: flex; padding: 0 4px 0 5px; background: var(--lavender); border-bottom: 3px solid var(--ink); }
.inspector-head h2 { flex: 1; line-height: 24px; font-size: 14px; font-weight: 600; color: var(--paper); }
.inspector-tabs { display: flex; gap: 1px; padding-top: 3px; }
.inspector-tabs .tab { width: 75px; padding-left: 2px; padding-right: 2px; }
.inspector-tabs .info-tab { width: 81px; }
.inspector-tabs .tab.active { height: 24px; padding-bottom: 4px; border: 0; border-top: 2px solid var(--ink); }
.inspector-tabs .end { margin-left: auto; }
.pane-buttons { display: flex; align-items: center; gap: 7px; margin-left: 19px; }
.inspector-body { flex: 1; min-height: 0; display: flex; padding-top: 3px; }
.nav { flex: 183 1 0; min-width: 0; margin-right: 2px; background: var(--paper); overflow: hidden; }
.nav li { height: 19px; display: flex; align-items: center; gap: 5px; padding-top: 1px; border-bottom: 1px dotted var(--gray); white-space: nowrap; }
.nav .l0 { padding-left: 4px; }
.nav .l1 { padding-left: 20px; }
.nav .l2 { padding-left: 36px; }
.nav .l3 { padding-left: 51px; }
.nav .picked { padding: 1px; background: var(--gray); }
.nav-scroll { margin-right: 1px; }

.content { flex: 550 1 0; min-width: 0; display: flex; flex-direction: column; padding: 0 6px 0 12px; }
.content-head { height: 35px; flex: none; display: flex; align-items: center; }
.content-head svg { width: 24px; height: 8px; }
.content-head h3 { margin: 2px 10px 0 15px; font-size: 13px; font-weight: 400; }
.rule { flex: 1; height: 1px; margin-top: 16px; background: var(--ink); }
.panel { flex: none; margin-bottom: 6px; padding: 5px 12px 12px 0; background: var(--gray); }
.panel h4 { padding-left: 14px; font-size: 13px; line-height: 16px; font-weight: 600; }
.panel.update { padding-bottom: 60px; }
.panel.update h4 { font-size: 15px; font-weight: 700; }
.panel.next { flex: 1; padding: 0; margin: 0; }
.fields { display: grid; grid-template-columns: 194px 1fr; gap: 6px 10px; align-items: center; margin-top: 23px; }
.fields label { text-align: right; }
.fields .combo { align-self: end; }
.update .fields { margin-top: 19px; row-gap: 7px; }
.fields .radio { grid-column: 2; display: flex; align-items: center; gap: 3px; height: 18px; text-align: left; }
.radio input { appearance: none; width: 15px; height: 15px; border: 1px solid var(--line); border-radius: 50%; background: linear-gradient(var(--gray), var(--paper)); }
.radio input:checked { background: radial-gradient(circle, #1c3c88 0 2px, #60a0e8 2px 3px, var(--paper) 4px, #60c0f0 5px, var(--blue) 7px); }
.options {
  position: absolute;
  z-index: 5;
  top: 18px;
  left: -1px;
  right: -1px;
  padding: 1px 0;
  background: var(--paper);
  border: 1px solid var(--lavender);
  border-top: 0;
  box-shadow: 2px 3px 1px var(--line);
}
.options li { padding-left: 4px; line-height: 14px; }
.options [aria-selected="true"] { background: var(--blue); color: var(--paper); }

/* Task bar */
.taskbar { height: 27px; flex: none; display: flex; align-items: center; gap: 3px; background: var(--ink); }
.portal { width: 178px; display: flex; align-items: center; gap: 10px; padding-left: 35px; color: var(--paper); font-size: 14px; font-weight: 600; }
.portal svg { width: 8px; height: 12px; }
.task { width: 113px; height: 20px; display: flex; align-items: center; gap: 4px; padding-left: 3px; background: var(--checker-dark); font-size: 13px; }
.task.current { background: var(--paper); }
```
